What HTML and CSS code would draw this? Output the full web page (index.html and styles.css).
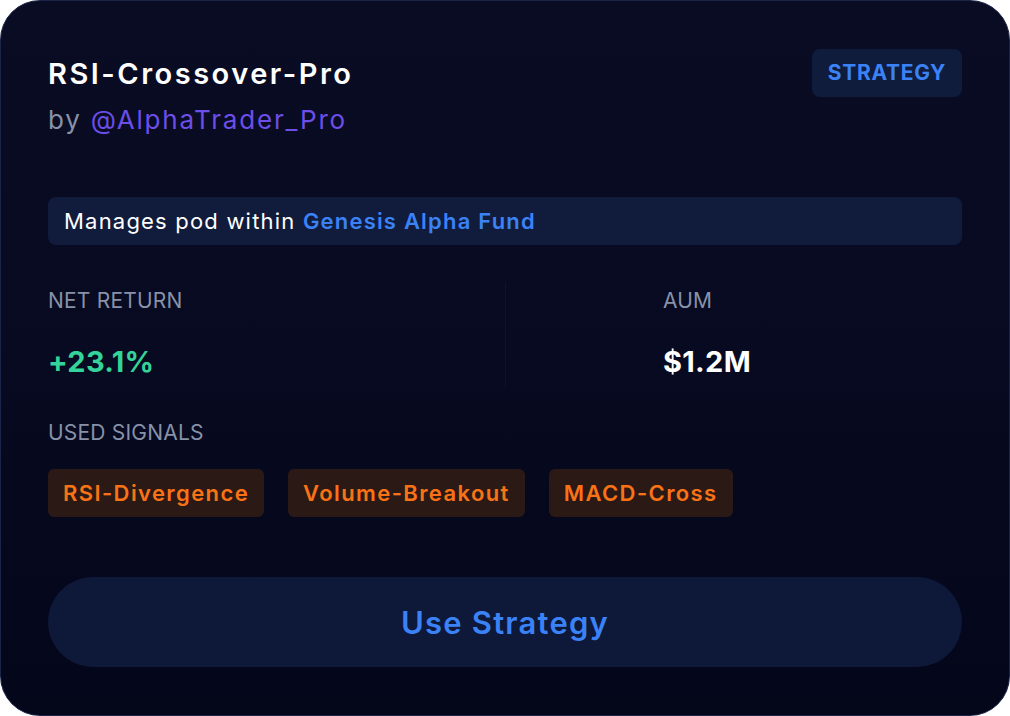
FILE: index.html
```html
<!DOCTYPE html>
<html>
<head>
<meta charset="utf-8">
<link rel="stylesheet" href="styles.css">
</head>
<body>
<div class="card">
  <div class="header">
    <div class="titles">
      <h1 class="title">RSI-Crossover-Pro</h1>
      <div class="author">by <span class="handle">@AlphaTrader_Pro</span></div>
    </div>
    <span class="badge">STRATEGY</span>
  </div>
  <div class="info">Manages pod within <span class="fund">Genesis Alpha Fund</span></div>
  <div class="stats">
    <div class="stat">
      <div class="label">NET RETURN</div>
      <div class="value positive">+23.1%</div>
    </div>
    <div class="stat stat-right">
      <div class="label">AUM</div>
      <div class="value">$1.2M</div>
    </div>
  </div>
  <div class="label">USED SIGNALS</div>
  <div class="chips">
    <span class="chip">RSI-Divergence</span>
    <span class="chip">Volume-Breakout</span>
    <span class="chip">MACD-Cross</span>
  </div>
  <button class="cta">Use Strategy</button>
</div>
</body>
</html>
```

FILE: styles.css
```css
* { box-sizing: border-box; }
html, body {
  margin: 0;
  padding: 0;
  background: #ffffff;
  width: 1010px;
  height: 716px;
  overflow: hidden;
}
body {
  font-family: "Inter", "Noto Sans", sans-serif;
}
.card {
  width: 1010px;
  height: 716px;
  border-radius: 40px;
  border: 1px solid #1b2447;
  background: linear-gradient(180deg, #0a0c24 0%, #070a20 50%, #04061a 100%);
  padding: 47px 47px 0 47px;
  display: flex;
  flex-direction: column;
}
.header {
  display: flex;
  justify-content: space-between;
  align-items: flex-start;
}
.title {
  margin: 0;
  font-size: 29px;
  font-weight: 600;
  color: #ffffff;
  line-height: 52px;
  letter-spacing: 2.5px;
}
.author {
  font-size: 26px;
  color: #8791a8;
  line-height: 40px;
  letter-spacing: 1.8px;
}
.handle { color: #6c4ee8; }
.badge {
  background: #0f1c3c;
  color: #3b82f6;
  font-weight: 700;
  font-size: 21px;
  letter-spacing: 0.7px;
  border-radius: 8px;
  height: 48px;
  line-height: 48px;
  margin-top: 1px;
  width: 150px;
  text-align: center;
}
.info {
  margin-top: 57px;
  height: 48px;
  background: #111c3c;
  border-radius: 8px;
  padding: 0 16px;
  font-size: 22px;
  letter-spacing: 1.2px;
  line-height: 48px;
  color: #ffffff;
}
.fund { color: #3b82f6; font-weight: 600; }
.stats {
  display: grid;
  grid-template-columns: 1fr 1fr;
  margin-top: 37px;
}
.stat { padding: 4px 0 6px; }
.stat-right {
  border-left: 1px solid #0e1230;
  padding-left: 157px;
}
.label {
  font-size: 21px;
  color: #8791a8;
  line-height: 30px;
  letter-spacing: 0.2px;
}
.value {
  margin-top: 26px;
  font-size: 29px;
  font-weight: 700;
  color: #ffffff;
  line-height: 40px;
  letter-spacing: 0.3px;
}
.value.positive { color: #34d399; }
.stats + .label { margin-top: 30px; }
.chips {
  display: flex;
  gap: 24px;
  margin-top: 21px;
}
.chip {
  background: #2b1915;
  color: #f97316;
  font-weight: 600;
  font-size: 22px;
  letter-spacing: 1.4px;
  height: 48px;
  line-height: 48px;
  padding: 0 15px;
  border-radius: 6px;
}
.cta {
  margin-top: 60px;
  height: 90px;
  width: 100%;
  border: none;
  border-radius: 45px;
  background: #0e1838;
  color: #3b82f6;
  font-family: inherit;
  font-size: 31px;
  font-weight: 600;
  letter-spacing: 1.2px;
}
```
